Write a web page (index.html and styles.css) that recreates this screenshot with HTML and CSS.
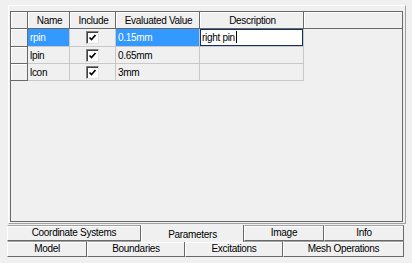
FILE: index.html
```html
<!DOCTYPE html>
<html lang="en">
  <head>
    <title>Design Properties</title>
    <link rel="stylesheet" href="styles.css">
  </head>
  <body>
  <div class="panel">
    <div class="grid">
      <table class="params">
        <colgroup>
          <col class="c-head">
          <col class="c-name">
          <col class="c-include">
          <col class="c-value">
          <col class="c-desc">
          <col class="c-fill">
        </colgroup>
        <thead>
          <tr>
            <th></th>
            <th>Name</th>
            <th>Include</th>
            <th>Evaluated Value</th>
            <th>Description</th>
            <th></th>
          </tr>
        </thead>
        <tbody>
          <tr>
            <td class="rowhead"></td>
            <td class="sel">rpin</td>
            <td class="check"><span class="checkbox"><svg width="9" height="9" viewBox="0 0 9 9"><path d="M1.5 4.5l2 2 4-4.5" fill="none" stroke="#000" stroke-width="1.7"/></svg></span></td>
            <td class="sel">0.15mm</td>
            <td class="editing"><div class="editbox">right pin<span class="caret"></span></div></td>
          </tr>
          <tr>
            <td class="rowhead"></td>
            <td>lpin</td>
            <td class="check"><span class="checkbox"><svg width="9" height="9" viewBox="0 0 9 9"><path d="M1.5 4.5l2 2 4-4.5" fill="none" stroke="#000" stroke-width="1.7"/></svg></span></td>
            <td>0.65mm</td>
            <td></td>
          </tr>
          <tr>
            <td class="rowhead"></td>
            <td>lcon</td>
            <td class="check"><span class="checkbox"><svg width="9" height="9" viewBox="0 0 9 9"><path d="M1.5 4.5l2 2 4-4.5" fill="none" stroke="#000" stroke-width="1.7"/></svg></span></td>
            <td>3mm</td>
            <td></td>
          </tr>
        </tbody>
      </table>
    </div>
  </div>

  <div class="tabs">
    <div class="tab-row upper">
      <div class="tab w-coord">Coordinate Systems</div>
      <div class="tab w-param active">Parameters</div>
      <div class="tab w-80">Image</div>
      <div class="tab w-80">Info</div>
    </div>
    <div class="tab-row lower">
      <div class="tab w-80">Model</div>
      <div class="tab w-98">Boundaries</div>
      <div class="tab w-98">Excitations</div>
      <div class="tab w-mesh">Mesh Operations</div>
    </div>
  </div>
  </body>
</html>
```

FILE: styles.css
```css
:root {
  --face: #f0f0f0;
  --shadow: #a0a0a0;
  --dark: #696969;
  --line: #c8c8c8;
  --highlight: #3399ff;
}

* {
  box-sizing: border-box;
}

body {
  margin: 0;
  background: var(--face);
  font-family: 'Liberation Sans', Arial, sans-serif;
  font-size: 10px;
  letter-spacing: -0.3px;
  color: #000;
}

.panel {
  margin: 5px 6px 0 8px;
  padding: 5px 2px 1px 1px;
  border: 1px solid;
  border-color: #fff var(--shadow) var(--shadow) #fff;
}

.grid {
  height: 211px;
  border: 1px solid var(--dark);
  overflow: hidden;
}

.params {
  border-collapse: collapse;
  table-layout: fixed;
  width: 392px;
  margin: -1px 0 0 -1px;
}

.c-head { width: 17px; }
.c-name { width: 42px; }
.c-include { width: 46px; }
.c-value { width: 84px; }
.c-desc { width: 104px; }
.c-fill { width: 99px; }

.params th,
.params td {
  height: 17px;
  padding: 0 0 0 2px;
  line-height: 15px;
  white-space: nowrap;
  overflow: hidden;
}

.params th {
  font-weight: normal;
  text-align: center;
  background: var(--face);
  border: 1px solid var(--dark);
  box-shadow: inset 1px 1px #fff;
}

.params td {
  border: 1px solid var(--line);
  text-align: left;
}

.params td.rowhead {
  border: 1px solid var(--dark);
  box-shadow: inset 1px 1px #fff;
}

.params td.sel {
  background: var(--highlight);
  color: #fff;
}

.params td.check {
  text-align: center;
  padding: 0;
}

.checkbox {
  display: inline-flex;
  align-items: center;
  justify-content: center;
  width: 13px;
  height: 13px;
  margin-top: 1px;
  vertical-align: top;
  background: #fff;
  border: 1px solid;
  border-color: #808080 #e3e3e3 #e3e3e3 #808080;
  box-shadow: inset 1px 1px #404040;
}

.params td.editing {
  padding: 0;
}

.editbox {
  height: 17px;
  padding-left: 1px;
  line-height: 15px;
  background: #fff;
  border: 1px solid #10305e;
}

.caret {
  display: inline-block;
  width: 1px;
  height: 12px;
  margin-left: 1px;
  vertical-align: -2px;
  background: #000;
}

.tabs {
  margin: 1px 0 0 7px;
  width: 397px;
}

.tab-row {
  display: flex;
  height: 16px;
}

.tab {
  height: 16px;
  line-height: 14px;
  text-align: center;
  border: 1px solid;
  border-color: var(--shadow) var(--dark) var(--dark) #fff;
  box-shadow: inset 0 1px #fff;
}

.tab.active {
  border-top: none;
  border-bottom: none;
  box-shadow: none;
  padding-top: 3px;
  height: 17px;
  position: relative;
  z-index: 1;
  background: var(--face);
}

.w-coord { width: 134px; }
.w-param { width: 103px; }
.w-80 { width: 80px; }
.w-98 { width: 98px; }
.w-mesh { width: 121px; }
```
